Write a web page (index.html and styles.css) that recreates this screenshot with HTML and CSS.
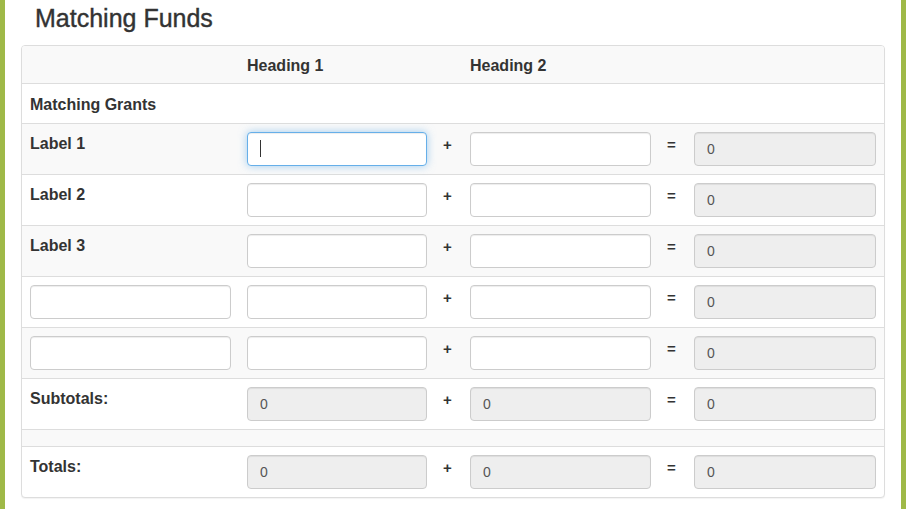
FILE: index.html
```html
<!DOCTYPE html>
<html>
<head>
<meta charset="utf-8">
<title>Matching Funds</title>
<link rel="stylesheet" href="styles.css">
</head>
<body>
<div class="page">
  <h3 class="title">Matching Funds</h3>
  <div class="panel">
    <table class="grid">
      <colgroup>
        <col class="c-label"><col class="c-h1"><col class="c-op"><col class="c-h2"><col class="c-op"><col class="c-total">
      </colgroup>
      <tr class="head">
        <th></th><th>Heading 1</th><th></th><th>Heading 2</th><th></th><th></th>
      </tr>
      <tr class="section">
        <td class="lbl">Matching Grants</td><td></td><td></td><td></td><td></td><td></td>
      </tr>
      <tr>
        <td class="lbl">Label 1</td>
        <td><div class="field"><input class="input focus" type="text"><span class="caret"></span></div></td>
        <td class="op">+</td>
        <td><input class="input" type="text"></td>
        <td class="op">=</td>
        <td><input class="input ro" type="text" value="0" readonly></td>
      </tr>
      <tr>
        <td class="lbl">Label 2</td>
        <td><input class="input" type="text"></td>
        <td class="op">+</td>
        <td><input class="input" type="text"></td>
        <td class="op">=</td>
        <td><input class="input ro" type="text" value="0" readonly></td>
      </tr>
      <tr>
        <td class="lbl">Label 3</td>
        <td><input class="input" type="text"></td>
        <td class="op">+</td>
        <td><input class="input" type="text"></td>
        <td class="op">=</td>
        <td><input class="input ro" type="text" value="0" readonly></td>
      </tr>
      <tr>
        <td><input class="input" type="text"></td>
        <td><input class="input" type="text"></td>
        <td class="op">+</td>
        <td><input class="input" type="text"></td>
        <td class="op">=</td>
        <td><input class="input ro" type="text" value="0" readonly></td>
      </tr>
      <tr>
        <td><input class="input" type="text"></td>
        <td><input class="input" type="text"></td>
        <td class="op">+</td>
        <td><input class="input" type="text"></td>
        <td class="op">=</td>
        <td><input class="input ro" type="text" value="0" readonly></td>
      </tr>
      <tr>
        <td class="lbl">Subtotals:</td>
        <td><input class="input ro" type="text" value="0" readonly></td>
        <td class="op">+</td>
        <td><input class="input ro" type="text" value="0" readonly></td>
        <td class="op">=</td>
        <td><input class="input ro" type="text" value="0" readonly></td>
      </tr>
      <tr class="spacer">
        <td></td><td></td><td></td><td></td><td></td><td></td>
      </tr>
      <tr>
        <td class="lbl">Totals:</td>
        <td><input class="input ro" type="text" value="0" readonly></td>
        <td class="op">+</td>
        <td><input class="input ro" type="text" value="0" readonly></td>
        <td class="op">=</td>
        <td><input class="input ro" type="text" value="0" readonly></td>
      </tr>
    </table>
  </div>
</div>
</body>
</html>
```

FILE: styles.css
```css
html, body {
  margin: 0;
  padding: 0;
  height: 100%;
}
body {
  background: #9fb948;
  font-family: "Liberation Sans", Arial, sans-serif;
  color: #333;
}
.page {
  background: #fff;
  margin: 0 5px;
  min-height: 509px;
  padding: 0 16px;
  box-sizing: border-box;
}
.title {
  margin: 0 0 12px 0;
  padding: 3px 0 0 14px;
  font-size: 25px;
  line-height: 30px;
  font-weight: normal;
  -webkit-text-stroke: 0.4px #333;
  color: #333;
}
.panel {
  border: 1px solid #ddd;
  border-radius: 4px;
  overflow: hidden;
  background: #fff;
  box-shadow: 0 1px 1px rgba(0,0,0,.05);
}
.grid {
  width: 100%;
  table-layout: fixed;
  border-collapse: separate;
  border-spacing: 0;
}
.c-label { width: 217px; }
.c-h1 { width: 196px; }
.c-op { width: 27px; }
.c-h2 { width: 197px; }
.c-total { width: 198px; }
.grid th, .grid td {
  padding: 8px;
  vertical-align: top;
  text-align: left;
  font-size: 16px;
  line-height: 22px;
  font-weight: bold;
  border-top: 1px solid #ddd;
}
.grid tr.head th {
  border-top: 0;
  line-height: 21px;
  padding-top: 9px;
  padding-bottom: 7px;
}
.grid td.lbl {
  padding-top: 9px;
  padding-bottom: 7px;
}
.grid tr.section td {
  line-height: 23px;
}
.grid tr:nth-child(odd) {
  background: #f9f9f9;
}
.grid tr.spacer td {
  height: 0;
  line-height: 0;
  padding: 8px;
}
.grid td.op {
  font-size: 15px;
  padding-top: 10px;
  padding-bottom: 6px;
}
.field {
  position: relative;
}
.input {
  display: block;
  width: 100%;
  height: 34px;
  box-sizing: border-box;
  padding: 6px 12px;
  font-family: "Liberation Sans", Arial, sans-serif;
  font-size: 14px;
  color: #555;
  background: #fff;
  border: 1px solid #ccc;
  border-radius: 4px;
  box-shadow: inset 0 1px 1px rgba(0,0,0,.075);
  outline: none;
  margin: 0;
}
.input.ro {
  background: #eee;
}
.input.focus {
  border-color: #66afe9;
  box-shadow: inset 0 1px 1px rgba(0,0,0,.075), 0 0 8px rgba(102,175,233,.6);
}
.caret {
  position: absolute;
  left: 13px;
  top: 8px;
  width: 1px;
  height: 17px;
  background: #333;
}
```
